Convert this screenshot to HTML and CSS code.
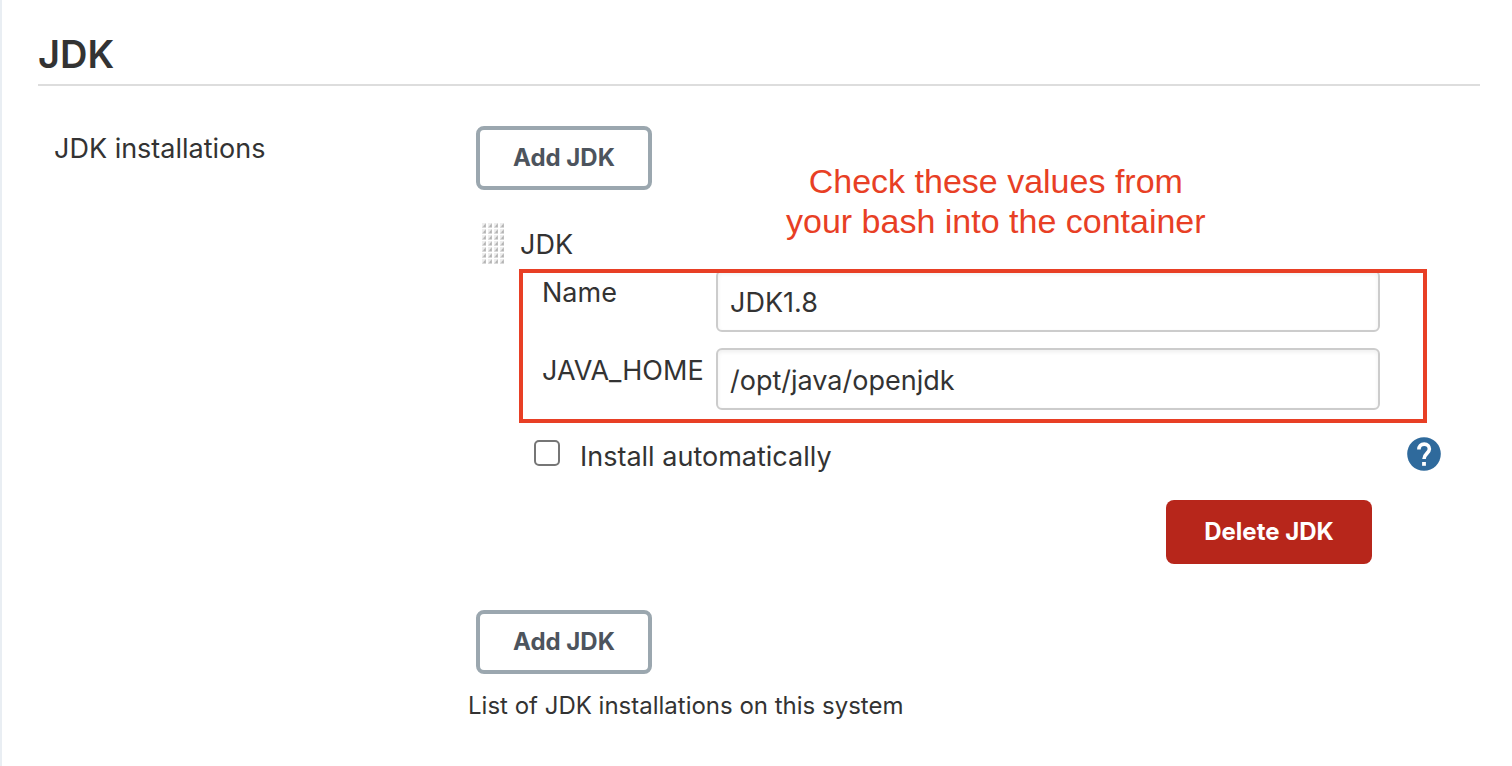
FILE: index.html
```html
<!DOCTYPE html>
<html lang="en">
<head>
<meta charset="utf-8">
<meta name="viewport" content="width=device-width, initial-scale=1">
<title>JDK</title>
<link rel="stylesheet" href="styles.css">
</head>
<body>
<main class="config">
  <h1 class="section-title">JDK</h1>
  <div class="setting">
    <div class="setting-label">JDK installations</div>
    <div class="setting-body">
      <button class="button button-outline" type="button">Add JDK</button>
      <section class="entry">
        <svg class="handle" width="24" height="42" viewBox="0 0 24 42" aria-hidden="true">
          <defs>
            <pattern id="grip" width="6" height="6" patternUnits="userSpaceOnUse">
              <path d="M2 1h4v5H2z" fill="#eee"/>
              <path d="M2 5.5L5.5 1.5H6v4z" fill="#c4c4c4"/>
              <path d="M4 5V3.5L5.5 2.5V5z" fill="#b4b4b4"/>
            </pattern>
          </defs>
          <rect width="24" height="42" fill="url(#grip)"/>
        </svg>
        <div class="entry-body">
          <h2 class="entry-title">JDK</h2>
          <div class="fields">
            <label class="field-label" for="name">Name</label>
            <input class="text-input" id="name" type="text" value="JDK1.8">
            <label class="field-label" for="home">JAVA_HOME</label>
            <input class="text-input" id="home" type="text" value="/opt/java/openjdk">
            <p class="note">Check these values from<br>your bash into the container</p>
            <div class="note-frame"></div>
          </div>
          <div class="option">
            <input class="checkbox" id="auto" type="checkbox">
            <label class="option-label" for="auto">Install automatically</label>
            <button class="help" type="button" aria-label="Help">
              <svg width="34" height="34" viewBox="0 0 34 34" aria-hidden="true">
                <circle cx="17" cy="17" r="16.8" fill="#2f6a9c"/>
                <path d="M11.9 12.6C11.9 9.2 14 7.1 17.2 7.1s5.2 2 5.2 5c0 4.1-5.4 4.7-5.4 9.8" fill="none" stroke="#fff" stroke-width="3.6"/>
                <path d="M15.1 25h3.8v3.8h-3.8z" fill="#fff"/>
              </svg>
            </button>
          </div>
          <div class="entry-actions">
            <button class="button button-danger" type="button">Delete JDK</button>
          </div>
        </div>
      </section>
      <button class="button button-outline" type="button">Add JDK</button>
      <p class="description">List of JDK installations on this system</p>
    </div>
  </div>
</main>
</body>
</html>
```
FILE: styles.css
```css
* {
  box-sizing: border-box;
}

body {
  margin: 0;
  background: #fff;
  color: #333;
  font: 27px/38px Inter, "Liberation Sans", sans-serif;
}

.config {
  min-height: 100vh;
  padding: 24px 32px 40px 36px;
  border-left: 2px solid #e9eef3;
}

.section-title {
  margin: 0;
  border-bottom: 2px solid #ddd;
  font-size: 38px;
  font-weight: 600;
  line-height: 60px;
}

.setting {
  display: grid;
  grid-template-columns: 430px 1fr;
  padding-top: 40px;
}

.setting-label {
  padding: 4px 16px;
}

.button {
  height: 64px;
  padding: 0 32px;
  border: 4px solid transparent;
  border-radius: 8px;
  font: 700 24px/32px Inter, "Liberation Sans", sans-serif;
  cursor: pointer;
}

.button-outline {
  display: block;
  min-width: 176px;
  margin-left: 8px;
  border-color: #9ba7af;
  background: #fff;
  color: #4d545d;
}

.button-danger {
  min-width: 206px;
  background: #b7261b;
  background-clip: border-box;
  color: #fff;
}

.entry {
  display: flex;
  gap: 16px;
  padding: 32px 39px 46px 12px;
}

.handle {
  flex: none;
}

.entry-body {
  flex: 1;
}

.entry-title {
  margin: 0;
  padding: 4px 0 6px;
  font-size: 27px;
  font-weight: 400;
}

.fields {
  position: relative;
  display: grid;
  grid-template-columns: 174px 1fr;
  row-gap: 16px;
  padding: 0 61px 0 22px;
}

.field-label {
  padding-top: 4px;
}

.text-input {
  width: 100%;
  height: 62px;
  padding: 2px 12px 0;
  border: 2px solid #ccc;
  border-radius: 6px;
  background: #fff;
  box-shadow: inset 0 2px 4px #0001;
  color: #333;
  font: inherit;
}

.note {
  position: absolute;
  bottom: 100%;
  left: 266px;
  margin: 0 0 29px;
  color: #e83f25;
  font: 34px/40px "Liberation Sans", sans-serif;
  text-align: center;
  white-space: nowrap;
}

.note-frame {
  position: absolute;
  inset: -1px 14px -13px -1px;
  border: 4px solid #e83f25;
  pointer-events: none;
}

.option {
  display: flex;
  align-items: center;
  padding: 27px 0 29px 14px;
}

.checkbox {
  width: 26px;
  height: 26px;
  margin: 0 20px 2px 0;
  border: 2px solid #767676;
  border-radius: 5px;
  background: #fff;
  appearance: none;
}

.checkbox:checked {
  background: #2f6a9c;
}

.option-label {
  padding-top: 6px;
  line-height: 28px;
}

.help {
  display: flex;
  margin-left: auto;
  padding: 0;
  border: 0;
  background: none;
  cursor: pointer;
}

.entry-actions {
  display: flex;
  justify-content: flex-end;
  padding-right: 69px;
}

.description {
  margin: 16px 0 0;
  font-size: 24px;
  line-height: 32px;
}
```
